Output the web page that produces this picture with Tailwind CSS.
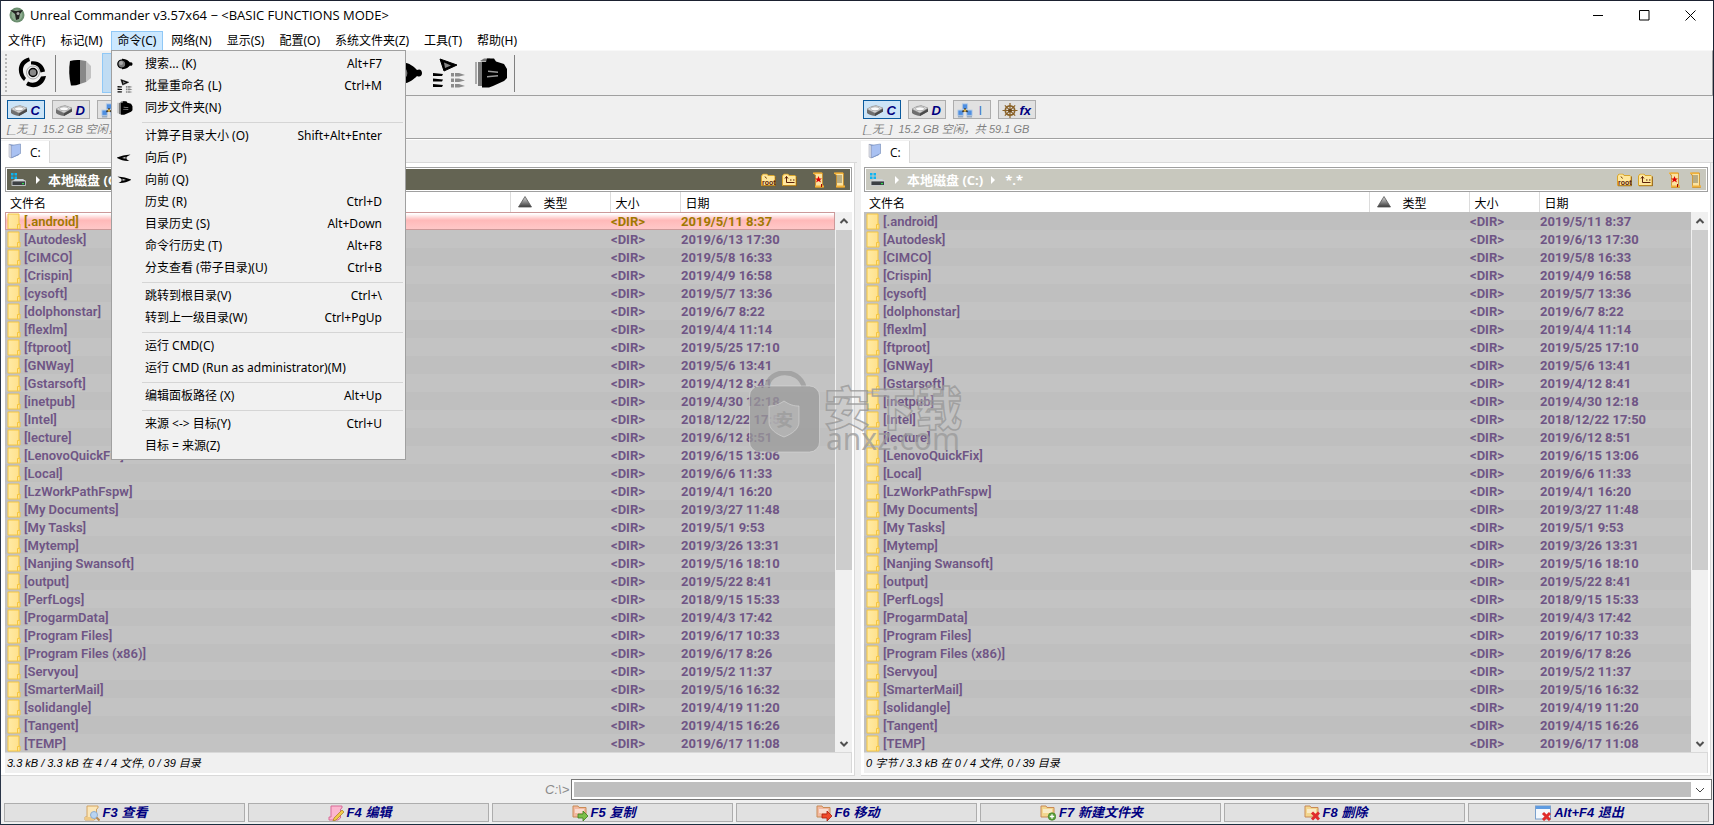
<!DOCTYPE html>
<html lang="zh-CN">
<head>
<meta charset="utf-8">
<title>Unreal Commander</title>
<script src="https://cdn.jsdelivr.net/npm/@tailwindcss/browser@4"></script>
</head>
<body class="h-screen overflow-hidden bg-[#f0f0f0] font-['Open_Sans','Noto_Sans_CJK_SC',sans-serif] text-[13px] leading-5 text-black">
<svg class="absolute size-0">
  <defs>
    <linearGradient id="fold" x1="0" x2="1"><stop offset="0" stop-color="#ffeaa4"/><stop offset="1" stop-color="#ffe08a"/></linearGradient>
    <linearGradient id="tri" x1="0" y1="0" x2="0" y2="1"><stop offset="0" stop-color="#e0e0e0"/><stop offset="1" stop-color="#3a3a3a"/></linearGradient>
    <symbol id="i-folder" viewBox="0 0 14 17"><path d="M1 1h11v10h1v5H1z" fill="url(#fold)" stroke="#f5c640"/><path d="M10.5 16v-4.500h2" fill="none" stroke="#f5c640"/></symbol>
    <symbol id="i-drive" viewBox="0 0 18 13"><path d="M1 5Q5 2 10 1.500l7 2.500v3.500l-8 4.500q-6-1-8-3z" fill="#6f6f6f"/><path d="M1 5Q5 2 10 1.500l7 2.500-8 5z" fill="#dcdcdc" stroke="#999" stroke-width=".5"/><ellipse cx="9" cy="4.800" rx="4.500" ry="2" fill="#fafafa" stroke="#888" stroke-width=".6"/><path d="M9 9.500v2.500l8-4.500V5z" fill="#4a4a4a"/></symbol>
    <symbol id="i-net" viewBox="0 0 18 17"><g fill="#4f8fe0" stroke="#b4cbe6"><rect x="6" y="1" width="6" height="6"/><rect x="1" y="8" width="6" height="6"/><rect x="11" y="8" width="6" height="6"/></g><path d="M9 6v4M6 10l3-2 3 2" stroke="#333" stroke-width="2" fill="none"/><circle cx="9" cy="8.500" r="1.500" fill="#e2b33c"/><path d="M1 15.500h6M11 15.500h6" stroke="#9aabc0" stroke-width="2"/></symbol>
    <symbol id="i-wheel" viewBox="0 0 16 16"><g fill="none" stroke="#8a6228"><circle cx="8" cy="8" r="5" stroke-width="1.800"/><path d="M8 0v16M0 8h16M2.500 2.500l11 11M13.500 2.500l-11 11" stroke-width="1.300"/></g><circle cx="8" cy="8" r="2" fill="#6b4718"/></symbol>
    <symbol id="i-tab" viewBox="0 0 14 16"><path d="M1 1 11 3v9L4 15 1 13z" fill="#6d8cc8"/><path d="M3 2.500 12.500 1v9.500L3 15z" fill="#a9c1f2" stroke="#7e93bd" stroke-width=".7"/><path d="M1 1v13l2 1V2.500z" fill="#dfe5ee" stroke="#99a" stroke-width=".5"/></symbol>
    <symbol id="i-disk" viewBox="0 0 15 13"><g fill="#0cb4f4"><path d="M0 0h2.500v2.500H0zM3.500 0H6v2.500H3.500zM0 3.500h2.500V6H0zM3.500 3.500H6V6H3.500z"/></g><path d="M2 8l2-2h8l2.500 2z" fill="#cfd4d8"/><rect x="1" y="8" width="13.500" height="4.500" fill="#3c4044" stroke="#d6d9dc" stroke-width=".8"/><rect x="11" y="10" width="2" height="1.200" fill="#2be04c"/></symbol>
    <symbol id="i-pfold" viewBox="0 0 15 13"><path d="M.5 2.500 2 .5h4l1 1.500h6l1 1v9H.5z" fill="#ffe79c" stroke="#d8a52c"/><path d="M1 12.500h13.500V3" fill="none" stroke="#8f5d12" stroke-width=".8"/></symbol>
    <symbol id="i-scroll" viewBox="0 0 11 16"><path d="M1.500 1h8v13h1v1.500H2.500V3h-1z" fill="#fbe3a0" stroke="#c98c22" stroke-width=".8"/><path d="M0 .5h9v1.500H0zM2 13.500h9V15H2z" fill="#f1b23a"/></symbol>
    <symbol id="i-find" viewBox="0 0 16 12"><path d="M5 .8C9 .5 11.500 3 13 4.500c1.500-.8 2.500.2 2.500 1.500S14.500 8.300 13 7.500c-1.500 1.500-4 4-8 3.700z"/><circle cx="4.800" cy="6" r="4" fill="#777" stroke="#000" stroke-width="1.200"/><circle cx="4" cy="5" r="2" fill="#aaa"/></symbol>
    <symbol id="i-rename" viewBox="0 0 32 30"><path d="M7 1 24 7 11 13z" stroke="#000" stroke-linejoin="round"/><path d="M11 4.500 18 7.500l-6 2.500z" fill="#888"/><path d="M0 15l5 .5 5 .5-1 2H0zM0 20.500l5 .5 5 .5-1 2H0zM0 26l5 .5 5 .5-1 2H0z"/><path d="M18 15h3v3.500h-3zM22 15h4l6 2-6 1.500h-4zM18 20.500h3V24h-3zM22 20.500h4l6 2-6 1.500h-4zM18 26h3v3.500h-3zM22 26h4l6 2-6 1.500h-4z" fill="#8b8b8b"/></symbol>
    <symbol id="i-sync" viewBox="0 0 32 30"><path d="M0 4h2v22H0z" fill="#aaa"/><path d="M3 4h4v24H3z" fill="#777"/><path d="M5 3 9 .5h6l2 3H7z" fill="#777"/><path d="M7 4h4l1-3.500h7l2 3 8 2.500 3 5v9l-3 3-11 5-4 1.500H7z"/><path d="M13 12.500l10 1V15l-10-1zM12 19.500l11-1V17l-11 1z" fill="#999"/></symbol>
    <symbol id="i-back" viewBox="0 0 14 8"><path d="M0 3.500C4 2 8 .8 13.500.5 12 1.500 11 2 9.500 3v2c1 1 2 1.500 3 2C8 7.500 4 6 0 4z"/><path d="M5 4l3.500-1.200v2z" fill="#ccc"/></symbol>
    <symbol id="i-paper" viewBox="0 0 16 16"><path d="M3 1h11v2l-1.500 1v9L10 15H1v-3h2z" fill="#fbe6b8" stroke="#d3a462"/><path d="M1 12h9v3H1z" fill="#efca86"/></symbol>
    <symbol id="i-cfold" viewBox="0 0 16 14"><path d="M1 1h5l1 1.500h7V12H1z" fill="currentColor" stroke="#c98a54"/><path d="M3 5h9M3 7h9" stroke="#fff"/></symbol>
  </defs>
</svg>
<div class="flex h-full flex-col border border-t-[#1b2130] border-r-[#1b2130] border-b-[#1b2f3f] border-l-[#2a3548]">
  <header class="flex h-[30px] shrink-0 items-center bg-white pb-0.5 pl-2">
    <svg class="mr-[5px] size-4" viewBox="0 0 16 16"><circle cx="8" cy="8" r="7.500" fill="#6c8f70"/><circle cx="8" cy="8" r="5.500" fill="#8fae92"/><path d="M1 3l6 1 7-1-3 4-1 5-3 1-1-6z" fill="#222"/><circle cx="9" cy="6.500" r="1.500" fill="#aaa"/></svg>
    <h1 class="flex-1">Unreal Commander v3.57x64 − &lt;BASIC FUNCTIONS MODE&gt;</h1>
    <button aria-label="最小化" class="grid w-[46px] place-items-center"><svg class="size-[11px]" viewBox="0 0 11 11" stroke="#000"><path d="M0 5.500h10"/></svg></button>
    <button aria-label="最大化" class="grid w-[46px] place-items-center"><svg class="size-[11px]" viewBox="0 0 11 11" stroke="#000" fill="none"><path d="M.5.500h9.500v9.500H.5z"/></svg></button>
    <button aria-label="关闭" class="grid w-[46px] place-items-center"><svg class="size-[11px]" viewBox="0 0 11 11" stroke="#000"><path d="M.5.500l10 10M10.500.500l-10 10"/></svg></button>
  </header>
  <nav class="flex h-[19px] shrink-0 items-start gap-px bg-white font-['Noto_Sans','Noto_Sans_CJK_SC',sans-serif] text-[12px] leading-[18px] *:border *:border-transparent *:px-1.5">
    <button>文件(F)</button><button>标记(M)</button><button class="border-[#90c8f6]! bg-[#cce8ff]">命令(C)</button><button>网络(N)</button><button>显示(S)</button><button>配置(O)</button><button>系统文件夹(Z)</button><button>工具(T)</button><button>帮助(H)</button>
  </nav>
  <div class="flex h-[46px] shrink-0 items-center border-t border-r border-b border-t-[#f8f8f8] border-r-[#a0a0a0] border-b-[#a0a0a0] pl-1">
    <span class="h-[38px] border-l-2 border-dotted border-[#b8b8b8]"></span>
    <button aria-label="刷新" class="ml-2.5 size-8"><svg viewBox="0 0 32 32" fill="none" stroke="#000"><circle cx="16" cy="15.500" r="4" fill="#888" stroke-width="1.500"/><circle cx="16" cy="15.500" r="6.500" stroke-width=".6" stroke="#777"/><path d="M12 .5C0 3-1 17 7 24l2-3C4 15 5 7 13 4z" fill="#000" stroke="none"/><path d="M14 4.500c8-1 13 4 14 10l-4.500 1C23 10 19 7 14 7.500z" fill="#000" stroke="none"/><path d="M29 19c-2 10-12 14-20 9l2-3.500c6 3 11 0 13-5z" fill="#000" stroke="none"/></svg></button>
    <span class="ml-1.5 h-[37px] border-l border-[#808080]"></span>
    <button aria-label="查看" class="ml-3 h-8 w-6"><svg viewBox="0 0 24 32"><path d="M2 4q5-1.500 10-1v24q-5 2-9 1.500-3-12-1-24.500z"/><path d="M12 3l6 1 2 6v9l-2 6-6 2z" fill="#888"/><path d="M18 4l5 5v12l-5 4z" fill="#c2c2c2"/></svg></button>
    <span class="ml-2.5 h-10 w-10 border border-[#90c8f6] bg-[#c0dcf3]"></span>
    <button aria-label="搜索" class="ml-[249px] h-6 w-8"><svg class="size-full"><use href="#i-find"/></svg></button>
    <button aria-label="批量重命名" class="ml-2.5 h-[30px] w-8"><svg class="size-full"><use href="#i-rename"/></svg></button>
    <button aria-label="同步文件夹" class="ml-2.5 h-[30px] w-8"><svg class="size-full"><use href="#i-sync"/></svg></button>
    <span class="ml-[7px] h-[37px] border-l border-[#808080]"></span>
  </div>
  <main id="panels" class="grid min-h-0 flex-1 grid-cols-2"></main>
  <form class="flex h-[27px] shrink-0 items-center pr-px">
    <label for="cmd" class="w-1/3 pr-0.5 text-right font-['Liberation_Sans'] text-[13px] text-[#8a8a8a] italic">C:\&gt;</label>
    <div class="flex h-[21px] flex-1 items-center border border-[#777] bg-white p-0.5">
      <input id="cmd" class="h-full min-w-0 flex-1 bg-[#bfbfbf] outline-none">
      <svg class="mx-1 h-2 w-2.5" viewBox="0 0 10 8" fill="none" stroke="#444"><path d="M1 2l4 4 4-4"/></svg>
    </div>
  </form>
  <footer id="keys" class="mb-0.5 grid shrink-0 grid-cols-7 gap-[3px] pr-1 pl-[3px] font-['Liberation_Sans','Noto_Sans_CJK_SC',sans-serif] text-[13px] font-bold text-[#000080] italic"></footer>
</div>

<div role="menu" class="absolute top-[50px] left-[111px] w-[295px] border border-[#a0a0a0] bg-[#f1f1f1] py-0.5 font-['Noto_Sans','Noto_Sans_CJK_SC',sans-serif] text-[12px]" id="menu"></div>

<div class="pointer-events-none absolute top-[371px] left-[749px]">
  <svg class="h-[82px] w-[215px]" viewBox="0 0 215 82">
    <path d="M18 16C20-2 50-4 55 16" fill="none" stroke="#9c9c9c" stroke-opacity=".8" stroke-width="5"/>
    <rect x=".5" y="15" width="70" height="66" rx="10" fill="#9a9a9a" fill-opacity=".75" stroke="#d8d8d8" stroke-opacity=".6"/>
    <path d="M35 30c6 4 10 5 15 5v16c0 7-7 12-15 15-8-3-15-8-15-15V35c5 0 9-1 15-5z" fill="#bcbcbc" fill-opacity=".6" stroke="#d8d8d8" stroke-opacity=".6"/>
    <text x="27" y="55" font-size="17" font-weight="700" fill="#a0a0a0" font-family="Noto Sans CJK SC">安</text>
    <text x="75" y="54" font-size="46" font-weight="900" font-family="Noto Sans CJK SC" fill="#c6c6c6" fill-opacity=".3" stroke="#989898" stroke-opacity=".8" stroke-width="1.500">安下载</text>
    <text x="77" y="79" font-size="30" fill="#999" fill-opacity=".75" font-family="Noto Sans">anxz.com</text>
  </svg>
</div>

<script>
const files = [
["[.android]","2019/5/11 8:37"],["[Autodesk]","2019/6/13 17:30"],["[CIMCO]","2019/5/8 16:33"],["[Crispin]","2019/4/9 16:58"],["[cysoft]","2019/5/7 13:36"],["[dolphonstar]","2019/6/7 8:22"],["[flexlm]","2019/4/4 11:14"],["[ftproot]","2019/5/25 17:10"],["[GNWay]","2019/5/6 13:41"],["[Gstarsoft]","2019/4/12 8:41"],["[inetpub]","2019/4/30 12:18"],["[Intel]","2018/12/22 17:50"],["[lecture]","2019/6/12 8:51"],["[LenovoQuickFix]","2019/6/15 13:06"],["[Local]","2019/6/6 11:33"],["[LzWorkPathFspw]","2019/4/1 16:20"],["[My Documents]","2019/3/27 11:48"],["[My Tasks]","2019/5/1 9:53"],["[Mytemp]","2019/3/26 13:31"],["[Nanjing Swansoft]","2019/5/16 18:10"],["[output]","2019/5/22 8:41"],["[PerfLogs]","2018/9/15 15:33"],["[ProgarmData]","2019/4/3 17:42"],["[Program Files]","2019/6/17 10:33"],["[Program Files (x86)]","2019/6/17 8:26"],["[Servyou]","2019/5/2 11:37"],["[SmarterMail]","2019/5/16 16:32"],["[solidangle]","2019/4/19 11:20"],["[Tangent]","2019/4/15 16:26"],["[TEMP]","2019/6/17 11:08"]];
const use = (id, cls) => `<svg class="${cls}"><use href="#${id}"/></svg>`;
const drives = [["i-drive","C"],["i-drive","D"],["i-net","I"],["i-wheel","fx"]];
function panel(active, status) {
  const rows = files.map(([n, d], i) => {
    const sel = active && i === 0;
    const cls = sel ? "bg-linear-to-b from-white from-10% via-[#ffb9b9] via-45% to-[#ffc9c9] text-[#a07800] outline -outline-offset-1 outline-[#c99]" : i % 2 ? "bg-[#c3c3c3]" : "bg-[#bfbfbf]";
    return `<tr class="h-[18px] ${cls}"><td class="p-0"><div class="flex items-center pl-0.5 font-semibold">${use("i-folder","mr-[3px] h-[17px] w-3.5")}${n}</div></td><td class="p-0"></td><td class="p-0 pl-px">&lt;DIR&gt;</td><td class="p-0 pl-px">${d}</td></tr>`;
  }).join("");
  return `<section class="flex min-w-0 flex-col">
  <div class="h-[43px] shrink-0 border-b border-[#a0a0a0] pt-1 pl-1.5 font-['Liberation_Sans','Noto_Sans_CJK_SC',sans-serif]">
    <div class="flex gap-[7px]">${drives.map(([ic, t], i) => `<button class="flex h-[19px] w-[38px] items-center justify-between border pt-0.5 pr-1 pl-0.5 text-[13px] font-bold text-[#000080] italic ${i === 0 ? "border-[#0a5a9e] bg-[#cce4f7]" : "border-[#adadad] bg-[#e1e1e1]"}">${use(ic, "h-[15px] w-[18px]")}<span class="${i === 2 ? "pr-1 font-normal text-[#3c78c8] not-italic" : ""}">${t}</span></button>`).join("")}</div>
    <p class="text-[11px] leading-5 text-[#808080] italic">[_无_]&nbsp; 15.2 GB 空闲，共 59.1 GB</p>
  </div>
  <div class="flex h-6 shrink-0 items-start border-t border-white pt-px ${active ? "" : "pl-1"}"><div class="flex h-[23px] w-12 items-start bg-white pt-px pl-[7px]">${use("i-tab","mt-px mr-2 h-4 w-3.5")}<span class="text-[12px] leading-[22px]">C:</span></div><div class="h-[22px] flex-1 border-b border-l border-[#d9d9d9]"></div></div>
  <div class="mr-0.5 flex min-h-0 flex-1 flex-col border-r border-b border-[#d9d9d9] bg-white pt-1 pr-0.5 pb-0.5 ${active ? "pl-1" : "ml-1 pl-[3px]"}">
    <div class="border border-[#a0a0a0] bg-white p-px"><div class="flex h-[21px] items-center gap-2 px-1 text-[13px] font-bold text-white ${active ? "bg-[#646453]" : "bg-[#c8c8be]"}">
      ${use("i-disk","h-[13px] w-[15px]")}<svg class="ml-0.5 h-2 w-1" viewBox="0 0 4 8" fill="#fff"><path d="M0 0l4 4-4 4z"/></svg><span>本地磁盘 (C:)</span><svg class="h-2 w-1" viewBox="0 0 4 8" fill="#fff"><path d="M0 0l4 4-4 4z"/></svg><span class="flex-1 pl-0.5">*.*</span>
      <button aria-label="根目录"><svg class="h-3.5 w-[15px]" viewBox="0 0 15 13"><use href="#i-pfold"/><path d="M4 3l1.500 2" stroke="#630"/><text x="1" y="11" font-size="7" font-weight="700" fill="#5c2008" font-family="Liberation Sans">root</text></svg></button>
      <button aria-label="上级目录" class="-ml-0.5"><svg class="h-3.5 w-[15px]" viewBox="0 0 15 13"><use href="#i-pfold"/><path d="M4.500 3v6h8M3 5l1.500-2L6 5M8 6.500h1.500M11 6.500h1.500" stroke="#5c2008" fill="none"/></svg></button>
      <button aria-label="收藏" class="ml-2"><svg class="h-4 w-[11px]" viewBox="0 0 11 16"><use href="#i-scroll"/><path d="M5.500 4l1 2.500H9L7 8l1 2.500L5.500 9 3 10.500 4 8 2 6.500h2.500z" fill="#d00"/><path d="M8.500 12v3" stroke="#a00"/></svg></button>
      <button aria-label="历史" class="mr-px ml-0.5"><svg class="h-4 w-[11px]" viewBox="0 0 11 16"><use href="#i-scroll"/><path d="M3 4h5M3 6h5M3 8h5M3 10h5" stroke="#776"/></svg></button>
    </div></div>
    <div class="flex min-h-0 flex-1 items-start justify-between overflow-hidden">
      <table class="w-full table-fixed border-collapse text-left font-['Roboto','Noto_Sans_CJK_SC',sans-serif] text-[13px] leading-[17px] font-bold text-[#6f5585]">
        <colgroup><col><col class="w-[100px]"><col class="w-[70px]"><col class="${active ? "w-[155px]" : "w-[152px]"}"></colgroup>
        <thead class="bg-white text-[12px] leading-4 text-black"><tr class="h-5 *:p-0 *:pt-1! *:font-normal"><th class="pl-[5px]!">文件名</th><th class="border-l border-[#dcdcdc]"><div class="flex items-center pl-[7px]"><svg class="mr-3 mb-1 h-3 w-3.5" viewBox="0 0 14 12"><path d="M7 .5 13.500 11H.5z" fill="url(#tri)" stroke="#555" stroke-width=".8"/></svg>类型</div></th><th class="border-l border-[#dcdcdc] pl-[5px]!">大小</th><th class="border-l border-[#dcdcdc] pl-[5px]!">日期</th></tr></thead>
        <tbody>${rows}</tbody>
      </table>
      <div class="mt-5 flex w-[17px] shrink-0 flex-col items-center self-stretch bg-[#f0f0f0] pl-px">
        <svg class="my-[5px] h-2 w-2.5 shrink-0" viewBox="0 0 10 8" fill="none" stroke="#505050" stroke-width="2"><path d="M1.500 6 5 2.500 8.500 6"/></svg>
        <div class="h-[340px] w-full bg-[#cdcdcd]"></div>
        <svg class="mt-auto mb-1 h-2 w-2.5 shrink-0" viewBox="0 0 10 8" fill="none" stroke="#505050" stroke-width="2"><path d="M1.500 2 5 5.500 8.500 2"/></svg>
      </div>
    </div>
    <p class="h-[21px] shrink-0 border-t border-r border-[#d9d9d9] bg-[#f0f0f0] pl-0.5 font-['Liberation_Sans','Noto_Sans_CJK_SC',sans-serif] text-[11px] leading-5 italic">${status}</p>
  </div></section>`;
}
document.getElementById("panels").innerHTML = panel(true, "3.3 kB / 3.3 kB 在 4 / 4 文件, 0 / 39 目录") + panel(false, "0 字节 / 3.3 kB 在 0 / 4 文件, 0 / 39 目录");

const badges = {
  view: `<use href="#i-paper"/><circle cx="10" cy="10" r="3.500" fill="#b8d4f2" stroke="#8faccc"/><path d="M12.500 12.500l3 3" stroke="#b98a50" stroke-width="2"/>`,
  edit: `<path d="M3 1h11v2l-1.500 1v9L10 15H1v-3h2z" fill="#fbb6cf" stroke="#d96a98"/><path d="M6 13 14 5l2 2-8 8-3 1z" fill="#f0c94a" stroke="#a87c1c" stroke-width=".7"/>`,
  copy: `<use href="#i-cfold" color="#f2b9a0" height="14"/><path d="M6 9h5V6l5 5-5 5v-3H6z" fill="#7cbf4a" stroke="#3c7d1c" stroke-width=".8"/>`,
  move: `<use href="#i-cfold" color="#f2b9a0" height="14"/><path d="M6 9h5V6l5 5-5 5v-3H6z" fill="#f04a2a" stroke="#a81c0c" stroke-width=".8"/>`,
  make: `<use href="#i-cfold" color="#f3d68e" height="14"/><circle cx="12" cy="11.500" r="3.800" fill="#5a9e3c" stroke="#3c7d1c" stroke-width=".6"/><path d="M12 9.300v4.400M9.800 11.500h4.400" stroke="#fff" stroke-width="1.300"/>`,
  del: `<use href="#i-cfold" color="#f3d68e" height="14"/><path d="M8 7.500l7 7M15 7.500l-7 7" stroke="#e02c2c" stroke-width="3"/>`,
  exit: `<rect x=".5" y="1" width="15" height="13" fill="#f4f8fd" stroke="#7aa0cc"/><path d="M1 1h14v3H1z" fill="#5f9be0"/><path d="M8 8l7 7M15 8l-7 7" stroke="#e02c2c" stroke-width="3"/>`
};
document.getElementById("keys").innerHTML = [["view","F3 查看"],["edit","F4 编辑"],["copy","F5 复制"],["move","F6 移动"],["make","F7 新建文件夹"],["del","F8 删除"],["exit","Alt+F4 退出"]]
  .map(([k, t]) => `<button class="flex h-[19px] items-center justify-center gap-[3px] border border-[#adadad] bg-[#e1e1e1] pt-px pr-[18px]"><svg class="size-4" viewBox="0 0 16 16">${badges[k]}</svg>${t}</button>`).join("");

const items = [["搜索... (K)","Alt+F7",use("i-find","h-3 w-4")],["批量重命名 (L)","Ctrl+M",use("i-rename","h-3.5 w-4")],["同步文件夹(N)","",use("i-sync","h-3.5 w-4")],0,["计算子目录大小 (O)","Shift+Alt+Enter"],["向后 (P)","",use("i-back","h-2 w-3.5")],["向前 (Q)","",use("i-back","h-2 w-3.5 -scale-x-100")],["历史 (R)","Ctrl+D"],["目录历史 (S)","Alt+Down"],["命令行历史 (T)","Alt+F8"],["分支查看 (带子目录)(U)","Ctrl+B"],0,["跳转到根目录(V)","Ctrl+\\"],["转到上一级目录(W)","Ctrl+PgUp"],0,["运行 CMD(C)",""],["运行 CMD (Run as administrator)(M)",""],0,["编辑面板路径 (X)","Alt+Up"],0,["来源 &lt;-&gt; 目标(Y)","Ctrl+U"],["目标 = 来源(Z)",""]];
document.getElementById("menu").innerHTML = items.map(it => it
  ? `<button role="menuitem" class="flex h-[22px] w-full items-center pr-[23px]"><span class="flex w-[33px] shrink-0 pl-[5px]">${it[2] || ""}</span><span class="flex-1 text-left whitespace-nowrap">${it[0]}</span><span>${it[1]}</span></button>`
  : `<div role="separator" class="flex h-1.5 items-center pr-0.5 pl-[30px]"><div class="h-px w-full bg-[#d5d5d5]"></div></div>`).join("");
</script>
</body>
</html>
